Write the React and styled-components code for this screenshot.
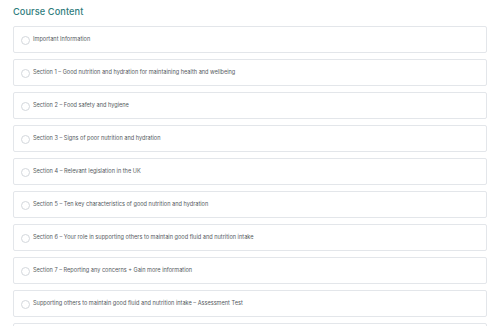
import React from "react"
import styled, { createGlobalStyle } from "styled-components"

const GlobalStyle = createGlobalStyle`
body {
    margin: 0;
    background: #ffffff;
    font-family: "Inter", "Liberation Sans", sans-serif;
    overflow: hidden;
}
`

const sections = [
    "Important Information",
    "Section 1 – Good nutrition and hydration for maintaining health and wellbeing",
    "Section 2 – Food safety and hygiene",
    "Section 3 – Signs of poor nutrition and hydration",
    "Section 4 – Relevant legislation in the UK",
    "Section 5 – Ten key characteristics of good nutrition and hydration",
    "Section 6 – Your role in supporting others to maintain good fluid and nutrition intake",
    "Section 7 – Reporting any concerns + Gain more information",
    "Supporting others to maintain good fluid and nutrition intake – Assessment Test",
]

export default function App() {
    return (
        <>
            <GlobalStyle />
            <Page>
                <Title>Course Content</Title>
                <List>
                    {sections.map((s) => (
                        <Item key={s}>
                            <Circle />
                            <Label>{s}</Label>
                        </Item>
                    ))}
                    {/* next card, only its top edge is in view */}
                    <Item />
                </List>
            </Page>
        </>
    )
}

const Page = styled.div`
padding: 6px 13px 0 13px;
width: 474px;
height: 326px;
box-sizing: content-box;
`

const Title = styled.h2`
margin: 0 0 8px 0;
font-size: 9.2px;
line-height: 12px;
font-weight: 500;
color: #2f7c7c;
letter-spacing: 0.1px;
`

const List = styled.div`
display: flex;
flex-direction: column;
gap: 6px;
`

const Item = styled.div`
height: 27px;
flex-shrink: 0;
box-sizing: border-box;
border: 1px solid #e3e6ea;
border-radius: 2px;
display: flex;
align-items: center;
padding-left: 7px;
gap: 3px;
`

const Circle = styled.span`
width: 9px;
height: 9px;
box-sizing: border-box;
border: 1px solid #d3d7dc;
border-radius: 50%;
margin-top: 2px;
flex-shrink: 0;
`

const Label = styled.span`
font-size: 5.6px;
color: #555a60;
margin-top: -2px;
`
